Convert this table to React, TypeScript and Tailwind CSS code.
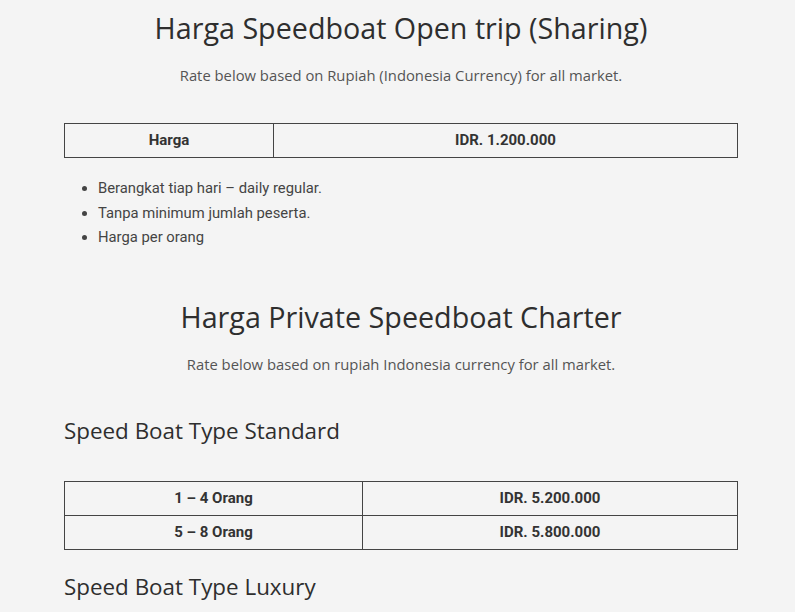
import React from 'react';

const heading = "font-['Open_Sans',sans-serif] text-[#2e2e2e]";
const body = "font-['Roboto',sans-serif]";

function PriceTable({ rows, firstCol }: { rows: [string, string][]; firstCol: string }) {
  return (
    <table className={`w-full border-collapse ${body} text-[15px] font-bold text-[#333]`}>
      <tbody>
        {rows.map(([label, price]) => (
          <tr key={label} className="h-[34px]">
            <td className={`border border-[#444] text-center ${firstCol}`}>{label}</td>
            <td className="border border-[#444] text-center">{price}</td>
          </tr>
        ))}
      </tbody>
    </table>
  );
}

export default function App() {
  return (
    <div className="min-h-[612px] bg-[#f4f4f4]">
      <div className="ml-[64px] w-[674px] pt-[8px]">
        <h1 className={`${heading} text-center text-[28.7px] leading-[40px]`}>
          Harga Speedboat Open trip (Sharing)
        </h1>
        <p className={`${heading} mt-[16px] text-center text-[14.8px] leading-[22px] text-[#555]`}>
          Rate below based on Rupiah (Indonesia Currency) for all market.
        </p>

        <div className="mt-[37px]">
          <PriceTable firstCol="w-[209px]" rows={[['Harga', 'IDR. 1.200.000']]} />
        </div>

        <ul className={`${body} mt-[18px] list-disc pl-[34px] text-[14.8px] leading-[24.5px] text-[#444]`}>
          <li>Berangkat tiap hari – daily regular.</li>
          <li>Tanpa minimum jumlah peserta.</li>
          <li>Harga per orang</li>
        </ul>

        <h2 className={`${heading} mt-[47px] text-center text-[28.7px] leading-[40px]`}>
          Harga Private Speedboat Charter
        </h2>
        <p className={`${heading} mt-[16px] text-center text-[14.8px] leading-[22px] text-[#555]`}>
          Rate below based on rupiah Indonesia currency for all market.
        </p>

        <h3 className={`${heading} mt-[41px] text-[22.4px] leading-[30px]`}>Speed Boat Type Standard</h3>

        <div className="mt-[35px]">
          <PriceTable
            firstCol="w-[298px]"
            rows={[
              ['1 – 4 Orang', 'IDR. 5.200.000'],
              ['5 – 8 Orang', 'IDR. 5.800.000'],
            ]}
          />
        </div>

        <h3 className={`${heading} mt-[22px] text-[22.4px] leading-[30px]`}>Speed Boat Type Luxury</h3>
      </div>
    </div>
  );
}
